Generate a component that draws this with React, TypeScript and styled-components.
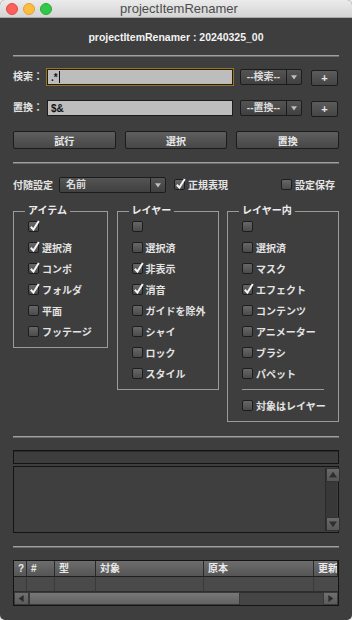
import React from 'react'
import styled, { createGlobalStyle } from 'styled-components'

const GlobalStyle = createGlobalStyle`
  html, body {
    margin: 0;
    padding: 0;
    background: #ececec;
  }
  body {
    font-family: "Liberation Sans", "Noto Sans CJK JP", sans-serif;
  }
  * {
    box-sizing: border-box;
  }
`

const Window = styled.div`
  width: 352px;
  height: 620px;
  display: flex;
  flex-direction: column;
  background: #3e3e3e;
  border-radius: 5px;
  overflow: hidden;
`

const TitleBar = styled.div`
  flex: none;
  height: 18px;
  display: grid;
  grid-template-columns: 1fr auto 1fr;
  align-items: center;
  padding-left: 6px;
  background: linear-gradient(#ebebeb, #d4d4d4);
  border-bottom: 1px solid #a9a9a9;
`

const Lights = styled.div`
  display: flex;
  gap: 5px;
`

const Light = styled.span<{ $color: string; $edge: string }>`
  width: 12px;
  height: 12px;
  border-radius: 50%;
  background: ${p => p.$color};
  border: 1px solid ${p => p.$edge};
`

const Title = styled.div`
  font-size: 13px;
  color: #4c4c4c;
  line-height: 18px;
`

const Body = styled.div`
  flex: 1;
  display: flex;
  flex-direction: column;
  padding: 0 13px;
  color: #e4e4e4;
  font-size: 10px;
  font-weight: bold;
`

const Heading = styled.div`
  margin-top: 12px;
  text-align: center;
  font-size: 10.5px;
  line-height: 14px;
  color: #f2f2f2;
`

const Separator = styled.div<{ $space: number }>`
  margin-top: ${p => p.$space}px;
  height: 2px;
  border-top: 1px solid #a0a0a0;
  border-bottom: 1px solid #6c6c6c;
`

const FormSection = styled.div`
  margin-top: 12px;
  display: flex;
  flex-direction: column;
  gap: 15px;
`

const FieldRow = styled.div`
  display: flex;
  align-items: flex-start;
  height: 16px;
`

const FieldLabel = styled.span`
  width: 34px;
  line-height: 16px;
`

const TextInput = styled.div<{ $focused?: boolean }>`
  width: 186px;
  height: 16px;
  display: flex;
  align-items: center;
  padding-left: 3px;
  background: #bdbdbd;
  border: 1px solid #1d1d1d;
  box-shadow: ${p => (p.$focused ? '0 0 0 1px #9c7416' : 'none')};
  color: #141414;
  font-size: 10px;
`

const Caret = styled.span`
  width: 1px;
  height: 12px;
  margin-left: 1px;
  background: #111;
`

const Select = styled.div<{ $width: number; $gap?: number }>`
  width: ${p => p.$width}px;
  height: 16px;
  margin-left: ${p => p.$gap ?? 0}px;
  display: flex;
  background: linear-gradient(#545454, #404040);
  border: 1px solid #1c1c1c;
  border-radius: 2px;
  color: #dcdcdc;
`

const SelectText = styled.span<{ $center?: boolean }>`
  flex: 1;
  line-height: 14px;
  padding-left: ${p => (p.$center ? 0 : 6)}px;
  text-align: ${p => (p.$center ? 'center' : 'left')};
  white-space: nowrap;
`

const SelectArrow = styled.span`
  width: 15px;
  display: flex;
  align-items: center;
  justify-content: center;
  border-left: 1px solid #1c1c1c;
`

const PlusButton = styled.button`
  width: 27px;
  height: 16px;
  margin-top: 1px;
  margin-left: 9px;
  padding: 0;
  background: linear-gradient(#5c5c5c, #454545);
  border: 1px solid #1c1c1c;
  border-radius: 2px;
  color: #e6e6e6;
  font: bold 11px "Liberation Sans", sans-serif;
  line-height: 13px;
`

const ButtonRow = styled.div`
  display: grid;
  grid-template-columns: repeat(3, 1fr);
  gap: 9px;
`

const ActionButton = styled.button`
  height: 18px;
  padding: 0;
  background: linear-gradient(#5e5e5e, #474747);
  border: 1px solid #1c1c1c;
  border-radius: 2px;
  color: #e8e8e8;
  font: bold 10px "Liberation Sans", "Noto Sans CJK JP", sans-serif;
`

const OptionsRow = styled.div`
  margin-top: 12px;
  height: 17px;
  display: flex;
  align-items: center;
`

const OptionLabel = styled.span`
  margin-right: 6px;
`

const CheckItem = styled.label<{ $push?: boolean }>`
  display: flex;
  align-items: center;
  gap: 3px;
  margin-left: ${p => (p.$push ? 'auto' : '8px')};
  margin-right: ${p => (p.$push ? '4px' : '0')};
`

const Box = styled.span`
  position: relative;
  flex: none;
  width: 11px;
  height: 11px;
  border: 1px solid #1d1d1d;
  border-radius: 2px;
  background: linear-gradient(#676767, #4b4b4b);
`

const Tick = styled.svg`
  position: absolute;
  left: 0;
  top: -2px;
  width: 11px;
  height: 12px;
  fill: none;
  stroke: #f4f4f4;
  stroke-width: 2;
`

const Groups = styled.div`
  margin-top: 13px;
  display: flex;
  justify-content: space-between;
  align-items: flex-start;
`

const Group = styled.fieldset<{ $width: number }>`
  width: ${p => p.$width}px;
  margin: 0;
  min-width: 0;
  padding: 0 0 5px 14px;
  border: 1px solid #9a9a9a;
`

const Legend = styled.legend`
  margin-left: -3px;
  padding: 0 3px;
  font-size: 10px;
  line-height: 10px;
  color: #ededed;
`

const CheckRow = styled.div`
  height: 21px;
  display: flex;
  align-items: center;
  gap: 3px;
  white-space: nowrap;
`

const GroupRule = styled.div`
  height: 11px;
  margin-right: 14px;
  display: flex;
  align-items: center;
  &::after {
    content: '';
    flex: 1;
    height: 1px;
    background: #9a9a9a;
  }
`

const StatusField = styled.div`
  margin-top: 12px;
  height: 14px;
  background: #3d3d3d;
  border: 1px solid #141414;
  box-shadow: inset 0 1px 0 #2a2a2a;
`

const LogArea = styled.div`
  margin-top: 2px;
  height: 67px;
  display: flex;
  justify-content: flex-end;
  padding: 1px;
  background: #3f3f3f;
  border: 1px solid #141414;
`

const VScroll = styled.div`
  width: 12px;
  display: flex;
  flex-direction: column;
  background: #383838;
  border-left: 1px solid #2a2a2a;
`

const ScrollButton = styled.div<{ $size: number }>`
  flex: none;
  width: ${p => p.$size}px;
  height: ${p => p.$size}px;
  display: flex;
  align-items: center;
  justify-content: center;
  background: linear-gradient(#6a6a6a, #575757);
  border: 1px solid #333;
`

const VTrack = styled.div`
  flex: 1;
`

const Table = styled.div`
  margin-top: 12px;
  border: 1px solid #141414;
  background: #3c3c3c;
`

const TableGrid = styled.div`
  display: grid;
  grid-template-columns: 13px 28px 41px 108px 110px 1fr;
`

const HeadCell = styled.div`
  height: 16px;
  padding-left: 4px;
  line-height: 15px;
  overflow: hidden;
  white-space: nowrap;
  background: linear-gradient(#6d6d6d, #555555);
  border-right: 1px solid #2a2a2a;
  border-bottom: 1px solid #1e1e1e;
  color: #eaeaea;
  &:last-child {
    padding-left: 2px;
    border-right: none;
  }
`

const DataCell = styled.div`
  height: 15px;
  background: #4a4a4a;
  border-right: 1px solid #3a3a3a;
  border-bottom: 1px solid #2e2e2e;
  &:last-child {
    border-right: none;
  }
`

const HScroll = styled.div`
  height: 13px;
  display: flex;
  background: #434343;
`

const HThumb = styled.div`
  width: 211px;
  background: linear-gradient(#777777, #626262);
  border: 1px solid #3a3a3a;
`

const HTrack = styled.div`
  flex: 1;
  background: #454545;
  border-top: 1px solid #2f2f2f;
`

const HArrow = styled.div`
  width: 15px;
  display: flex;
  align-items: center;
  justify-content: center;
  background: linear-gradient(#707070, #5b5b5b);
  border: 1px solid #3a3a3a;
`

const Triangle = ({ dir, color, size }: { dir: 'up' | 'down' | 'left' | 'right'; color: string; size: number }) => {
  const pts = {
    up: '0,8 5,1 10,8',
    down: '0,2 5,9 10,2',
    left: '8,0 1,5 8,10',
    right: '2,0 9,5 2,10',
  }[dir]
  return (
    <svg width={size} height={size} viewBox="0 0 10 10">
      <polygon points={pts} fill={color} />
    </svg>
  )
}

const Check = ({ checked }: { checked?: boolean }) => (
  <Box>
    {checked && (
      <Tick viewBox="0 0 11 12">
        <path d="M1.8 6.8 L4.4 9.6 L9.8 1" />
      </Tick>
    )}
  </Box>
)

type Item = { label: string; checked?: boolean }

const itemGroup: Item[] = [
  { label: '', checked: true },
  { label: '選択済', checked: true },
  { label: 'コンポ', checked: true },
  { label: 'フォルダ', checked: true },
  { label: '平面' },
  { label: 'フッテージ' },
]

const layerGroup: Item[] = [
  { label: '' },
  { label: '選択済' },
  { label: '非表示', checked: true },
  { label: '消音', checked: true },
  { label: 'ガイドを除外' },
  { label: 'シャイ' },
  { label: 'ロック' },
  { label: 'スタイル' },
]

const innerGroup: Item[] = [
  { label: '' },
  { label: '選択済' },
  { label: 'マスク' },
  { label: 'エフェクト', checked: true },
  { label: 'コンテンツ' },
  { label: 'アニメーター' },
  { label: 'ブラシ' },
  { label: 'パペット' },
]

const columns = ['?', '#', '型', '対象', '原本', '更新']

const CheckList = ({ items }: { items: Item[] }) => (
  <>
    {items.map((it, i) => (
      <CheckRow key={i}>
        <Check checked={it.checked} />
        {it.label && <span>{it.label}</span>}
      </CheckRow>
    ))}
  </>
)

const Dropdown = ({ text, width, gap, center }: { text: string; width: number; gap?: number; center?: boolean }) => (
  <Select $width={width} $gap={gap}>
    <SelectText $center={center}>{text}</SelectText>
    <SelectArrow>
      <Triangle dir="down" color="#bdbdbd" size={6} />
    </SelectArrow>
  </Select>
)

export default function App() {
  return (
    <>
      <GlobalStyle />
      <Window>
        <TitleBar>
          <Lights>
            <Light $color="#fc605b" $edge="#de4a44" />
            <Light $color="#fdbc40" $edge="#dea236" />
            <Light $color="#34c84a" $edge="#27aa35" />
          </Lights>
          <Title>projectItemRenamer</Title>
          <span />
        </TitleBar>
        <Body>
          <Heading>projectItemRenamer : 20240325_00</Heading>
          <Separator $space={11} />

          <FormSection>
            <FieldRow>
              <FieldLabel>検索：</FieldLabel>
              <TextInput $focused>
                .*<Caret />
              </TextInput>
              <Dropdown text="--検索--" width={62} gap={7} center />
              <PlusButton>+</PlusButton>
            </FieldRow>
            <FieldRow>
              <FieldLabel>置換：</FieldLabel>
              <TextInput>$&amp;</TextInput>
              <Dropdown text="--置換--" width={62} gap={7} center />
              <PlusButton>+</PlusButton>
            </FieldRow>
            <ButtonRow>
              <ActionButton>試行</ActionButton>
              <ActionButton>選択</ActionButton>
              <ActionButton>置換</ActionButton>
            </ButtonRow>
          </FormSection>

          <Separator $space={13} />

          <OptionsRow>
            <OptionLabel>付随設定</OptionLabel>
            <Dropdown text="名前" width={107} />
            <CheckItem>
              <Check checked />
              正規表現
            </CheckItem>
            <CheckItem $push>
              <Check />
              設定保存
            </CheckItem>
          </OptionsRow>

          <Groups>
            <Group $width={95}>
              <Legend>アイテム</Legend>
              <CheckList items={itemGroup} />
            </Group>
            <Group $width={102}>
              <Legend>レイヤー</Legend>
              <CheckList items={layerGroup} />
            </Group>
            <Group $width={112}>
              <Legend>レイヤー内</Legend>
              <CheckList items={innerGroup} />
              <GroupRule />
              <CheckList items={[{ label: '対象はレイヤー' }]} />
            </Group>
          </Groups>

          <Separator $space={14} />

          <StatusField />
          <LogArea>
            <VScroll>
              <ScrollButton $size={14}>
                <Triangle dir="up" color="#2e2e2e" size={8} />
              </ScrollButton>
              <VTrack />
              <ScrollButton $size={14}>
                <Triangle dir="down" color="#2e2e2e" size={8} />
              </ScrollButton>
            </VScroll>
          </LogArea>

          <Separator $space={13} />

          <Table>
            <TableGrid>
              {columns.map(c => (
                <HeadCell key={c}>{c}</HeadCell>
              ))}
              {columns.map(c => (
                <DataCell key={c} />
              ))}
            </TableGrid>
            <HScroll>
              <HArrow>
                <Triangle dir="left" color="#2a2a2a" size={7} />
              </HArrow>
              <HThumb />
              <HTrack />
              <HArrow>
                <Triangle dir="right" color="#2a2a2a" size={7} />
              </HArrow>
            </HScroll>
          </Table>
        </Body>
      </Window>
    </>
  )
}
